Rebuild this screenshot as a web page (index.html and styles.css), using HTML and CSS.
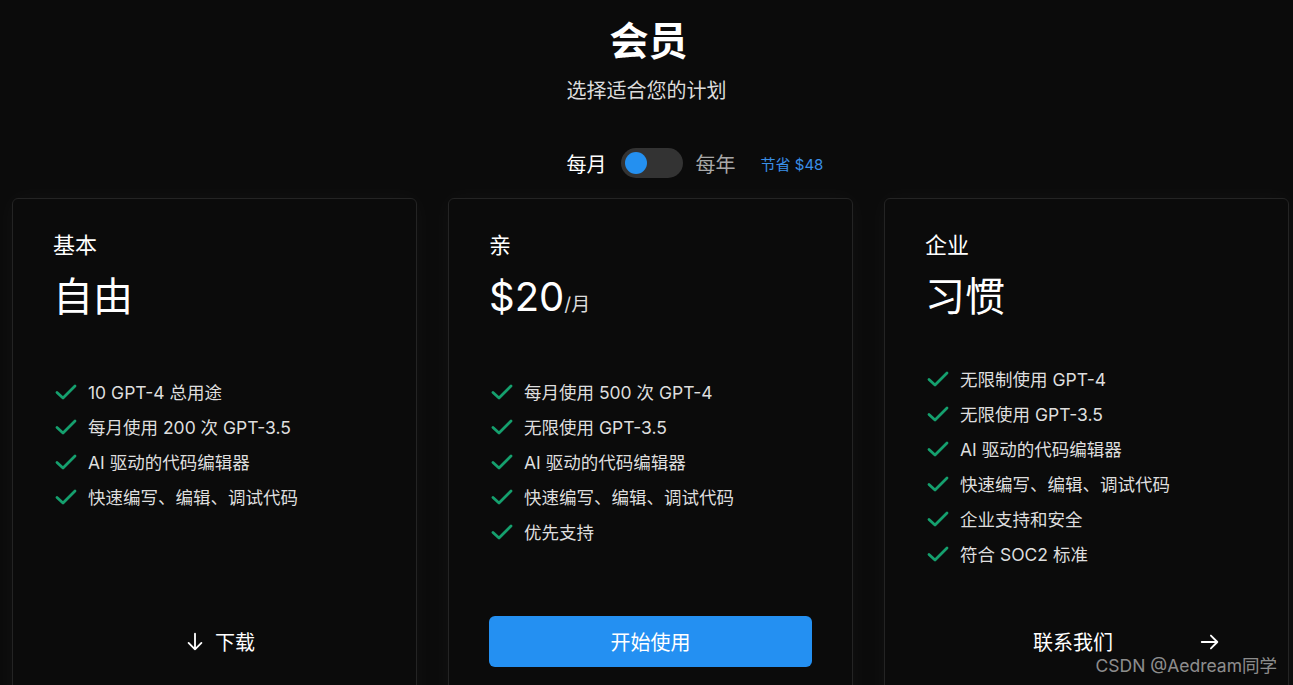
FILE: index.html
```
<!DOCTYPE html>
<html lang="zh-CN">
<head>
    <meta charset="UTF-8">
    <meta name="viewport" content="width=device-width, initial-scale=1.0">
    <title>会员</title>
    <link rel="stylesheet" href="styles.css">
</head>
<body>

<div class="header">
    <h1>会员</h1>
    <p class="subtitle">选择适合您的计划</p>
    <div class="billing">
        <span class="billing-on">每月</span>
        <div class="switch"><div class="knob"></div></div>
        <span class="billing-off">每年</span>
        <span class="save">节省 $48</span>
    </div>
</div>

<div class="plans">
    <div class="card">
        <div class="plan-label">基本</div>
        <div class="plan-name">自由</div>
        <ul class="features">
            <li><svg class="check" viewBox="0 0 24 24"><polyline points="3,12.5 9,18 21,6"/></svg>10 GPT-4 总用途</li>
            <li><svg class="check" viewBox="0 0 24 24"><polyline points="3,12.5 9,18 21,6"/></svg>每月使用 200 次 GPT-3.5</li>
            <li><svg class="check" viewBox="0 0 24 24"><polyline points="3,12.5 9,18 21,6"/></svg>AI 驱动的代码编辑器</li>
            <li><svg class="check" viewBox="0 0 24 24"><polyline points="3,12.5 9,18 21,6"/></svg>快速编写、编辑、调试代码</li>
        </ul>
        <div class="btn btn-plain">
            <svg class="arrow" viewBox="0 0 24 24"><path d="M12 3v17M5 13l7 7 7-7"/></svg>
            <span>下载</span>
        </div>
    </div>

    <div class="card">
        <div class="plan-label">亲</div>
        <div class="plan-name">$20<span class="per">/月</span></div>
        <ul class="features">
            <li><svg class="check" viewBox="0 0 24 24"><polyline points="3,12.5 9,18 21,6"/></svg>每月使用 500 次 GPT-4</li>
            <li><svg class="check" viewBox="0 0 24 24"><polyline points="3,12.5 9,18 21,6"/></svg>无限使用 GPT-3.5</li>
            <li><svg class="check" viewBox="0 0 24 24"><polyline points="3,12.5 9,18 21,6"/></svg>AI 驱动的代码编辑器</li>
            <li><svg class="check" viewBox="0 0 24 24"><polyline points="3,12.5 9,18 21,6"/></svg>快速编写、编辑、调试代码</li>
            <li><svg class="check" viewBox="0 0 24 24"><polyline points="3,12.5 9,18 21,6"/></svg>优先支持</li>
        </ul>
        <div class="btn btn-primary">开始使用</div>
    </div>

    <div class="card">
        <div class="plan-label">企业</div>
        <div class="plan-name">习惯</div>
        <ul class="features features-long">
            <li><svg class="check" viewBox="0 0 24 24"><polyline points="3,12.5 9,18 21,6"/></svg>无限制使用 GPT-4</li>
            <li><svg class="check" viewBox="0 0 24 24"><polyline points="3,12.5 9,18 21,6"/></svg>无限使用 GPT-3.5</li>
            <li><svg class="check" viewBox="0 0 24 24"><polyline points="3,12.5 9,18 21,6"/></svg>AI 驱动的代码编辑器</li>
            <li><svg class="check" viewBox="0 0 24 24"><polyline points="3,12.5 9,18 21,6"/></svg>快速编写、编辑、调试代码</li>
            <li><svg class="check" viewBox="0 0 24 24"><polyline points="3,12.5 9,18 21,6"/></svg>企业支持和安全</li>
            <li><svg class="check" viewBox="0 0 24 24"><polyline points="3,12.5 9,18 21,6"/></svg>符合 SOC2 标准</li>
        </ul>
        <div class="btn btn-contact">
            <span>联系我们</span>
            <svg class="arrow" viewBox="0 0 24 24"><path d="M3 12h17M13 5l7 7-7 7"/></svg>
        </div>
    </div>
</div>

<div class="watermark">CSDN @Aedream同学</div>

</body>
</html>
```

FILE: styles.css
```
html {
    overflow: hidden;
}

body {
    margin: 0;
    background-color: #0b0b0b; /* 深色背景 */
    color: #fff;
    font-family: Inter, "Noto Sans CJK SC", sans-serif;
}

/* 顶部标题 */
.header {
    display: flex;
    flex-direction: column;
    align-items: center;
    padding-top: 18px;
}

h1 {
    margin: 0;
    font-size: 39px;
    line-height: 45px;
    font-weight: 700;
    padding-left: 4px;
}

.subtitle {
    margin: 14px 0 0;
    font-size: 20px;
    line-height: 28px;
    color: #dcdcdc;
}

/* 月付 / 年付切换 */
.billing {
    display: flex;
    align-items: center;
    margin-top: 43px;
    height: 30px;
    font-size: 20px;
    padding-left: 97px;
}

.billing-on {
    color: #fff;
}

.switch {
    width: 62px;
    height: 30px;
    border-radius: 15px;
    background-color: #333;
    margin: 0 13px 0 14px;
    display: flex;
    align-items: center;
    padding-left: 4px;
    box-sizing: border-box;
}

.knob {
    width: 22px;
    height: 22px;
    border-radius: 50%;
    background-color: #2490f0;
}

.billing-off {
    color: #a8a8a8;
}

.save {
    margin-left: 25px;
    font-size: 15px;
    color: #3a8fe8;
}

/* 套餐卡片 */
.plans {
    display: grid;
    grid-template-columns: repeat(3, 405px);
    column-gap: 31px;
    padding-left: 12px;
    margin-top: 20px;
}

.card {
    height: 520px;
    box-sizing: border-box;
    border: 1px solid #242424;
    border-radius: 6px;
    background-color: #0b0b0b;
    box-shadow: 0 0 24px rgba(255, 255, 255, 0.035);
    padding: 32px 40px 50px;
    display: flex;
    flex-direction: column;
}

.plan-label {
    font-size: 22px;
    line-height: 28px;
}

.plan-name {
    margin-top: 14px;
    height: 48px;
    font-size: 40px;
    line-height: 48px;
    font-weight: 400;
}

.per {
    font-size: 19px;
    line-height: 1;
    color: #ddd;
}

.features {
    list-style: none;
    margin: 53px 0 0;
    padding: 0;
}

.features-long {
    margin-top: 40px;
}

.features li {
    display: flex;
    align-items: center;
    height: 35px;
    font-size: 17.5px;
    color: #dedede;
}

.check {
    width: 24px;
    height: 24px;
    margin: 0 10px 0 1px;
    fill: none;
    stroke: #15a06e;
    stroke-width: 2.8;
    stroke-linecap: round;
    stroke-linejoin: round;
}

/* 底部按钮 */
.btn {
    margin-top: auto;
    height: 51px;
    border-radius: 6px;
    display: flex;
    align-items: center;
    font-size: 20px;
    color: #fff;
}

.btn-plain {
    justify-content: center;
    gap: 9px;
    padding-left: 10px;
}

.btn-primary {
    justify-content: center;
    background-color: #2490f2;
}

.btn-contact {
    justify-content: space-between;
    padding: 0 27px 0 108px;
}

.arrow {
    width: 22px;
    height: 22px;
    fill: none;
    stroke: #fff;
    stroke-width: 2;
    stroke-linecap: round;
    stroke-linejoin: round;
}

/* 水印 */
.watermark {
    position: absolute;
    right: 16px;
    bottom: 8px;
    font-size: 17.5px;
    color: rgba(255, 255, 255, 0.55);
}
```
